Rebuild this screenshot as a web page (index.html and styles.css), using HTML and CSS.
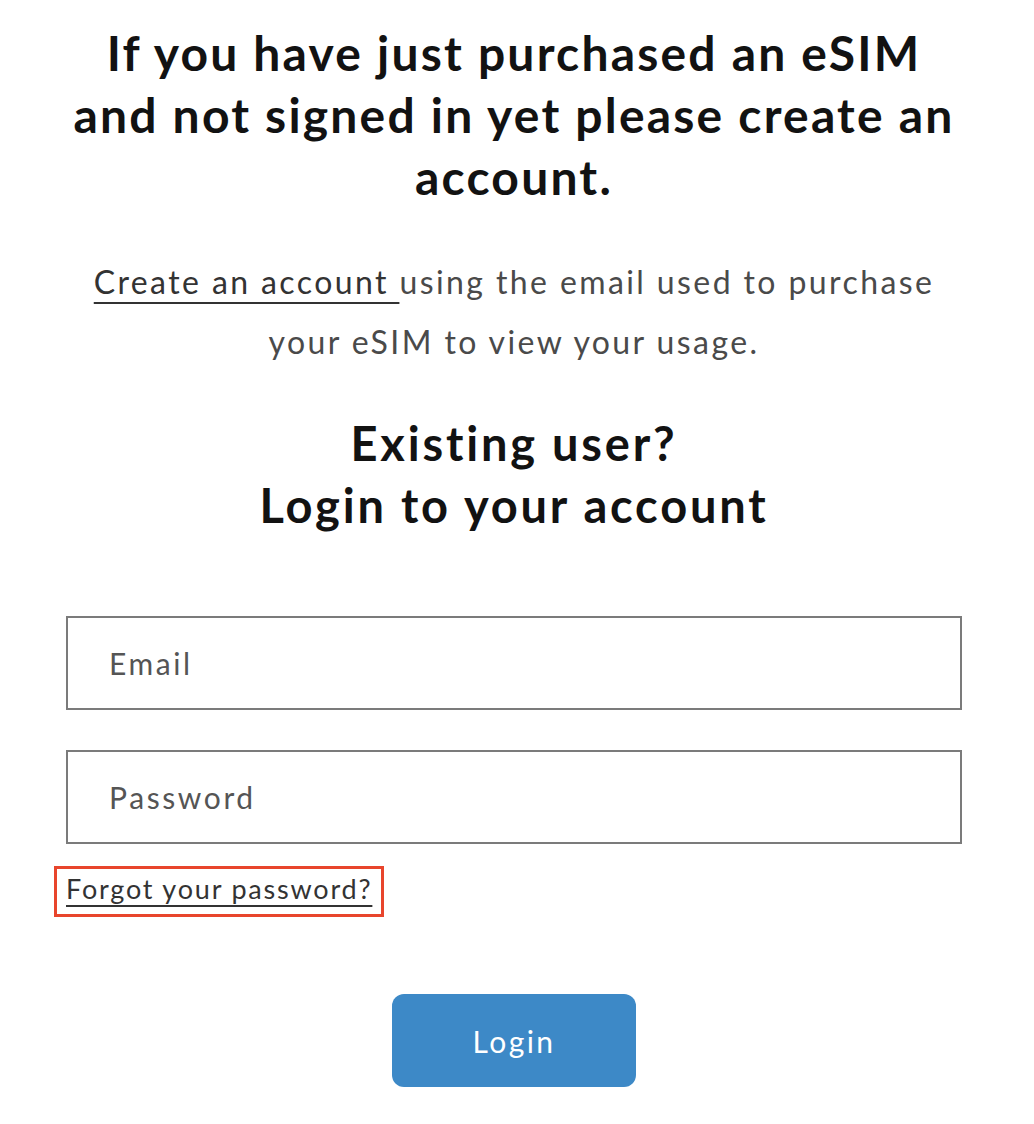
FILE: index.html
```html
<!DOCTYPE html>
<html>
<head>
<meta charset="utf-8">
<link rel="stylesheet" href="styles.css">
</head>
<body>
<main class="page">
  <h1 class="title">If you have just purchased an eSIM and not signed in yet please create an account.</h1>
  <p class="intro"><a class="intro-link" href="#">Create an account </a>using the email used to purchase your eSIM to view your usage.</p>
  <h2 class="subtitle">Existing user?<br>Login to your account</h2>
  <form class="form">
    <div class="field"><span class="placeholder">Email</span></div>
    <div class="field"><span class="placeholder">Password</span></div>
    <div class="forgot-row"><a class="forgot" href="#">Forgot your password?</a></div>
    <div class="actions"><button class="btn" type="button">Login</button></div>
  </form>
</main>
</body>
</html>
```
FILE: styles.css
```css
* { box-sizing: border-box; }
html, body { margin: 0; padding: 0; background: #fff; }
body { font-family: "Lato", "Open Sans", sans-serif; color: #121212; }
.page { width: 1034px; padding: 22px 72px 0 66px; display: flex; flex-direction: column; align-items: stretch; }
.title { margin: 0; text-align: center; font-size: 48px; font-weight: 700; line-height: 62px; letter-spacing: 2.2px; padding: 0; }
.intro { margin: 44px 0 0; text-align: center; font-size: 32px; line-height: 60px; color: #4a4a4a; letter-spacing: 2.4px; }
.intro-link { color: #333; text-decoration: underline; text-decoration-thickness: 2px; text-underline-offset: 8px; }
.subtitle { margin: 40px 0 0; text-align: center; font-size: 47px; font-weight: 700; line-height: 62px; letter-spacing: 2.8px; }
.form { margin-top: 80px; display: flex; flex-direction: column; }
.field { height: 94px; border: 2px solid #7b7b7b; display: flex; align-items: center; padding-left: 41px; }
.field + .field { margin-top: 40px; }
.placeholder { font-size: 30px; color: #555; letter-spacing: 2.6px; }
.forgot-row { margin-top: 22px; margin-left: -12px; display: flex; }
.forgot { display: inline-block; border: 3px solid #e8452c; padding: 3px 9px 9px; font-size: 27px; color: #333; letter-spacing: 1.8px; text-decoration: underline; text-decoration-thickness: 2px; text-underline-offset: 6px; }
.actions { margin-top: 77px; display: flex; justify-content: center; }
.btn { width: 244px; height: 93px; border: none; border-radius: 12px; background: #3d89c7; color: #fff; font-family: inherit; font-size: 30px; letter-spacing: 2.4px; }
```
